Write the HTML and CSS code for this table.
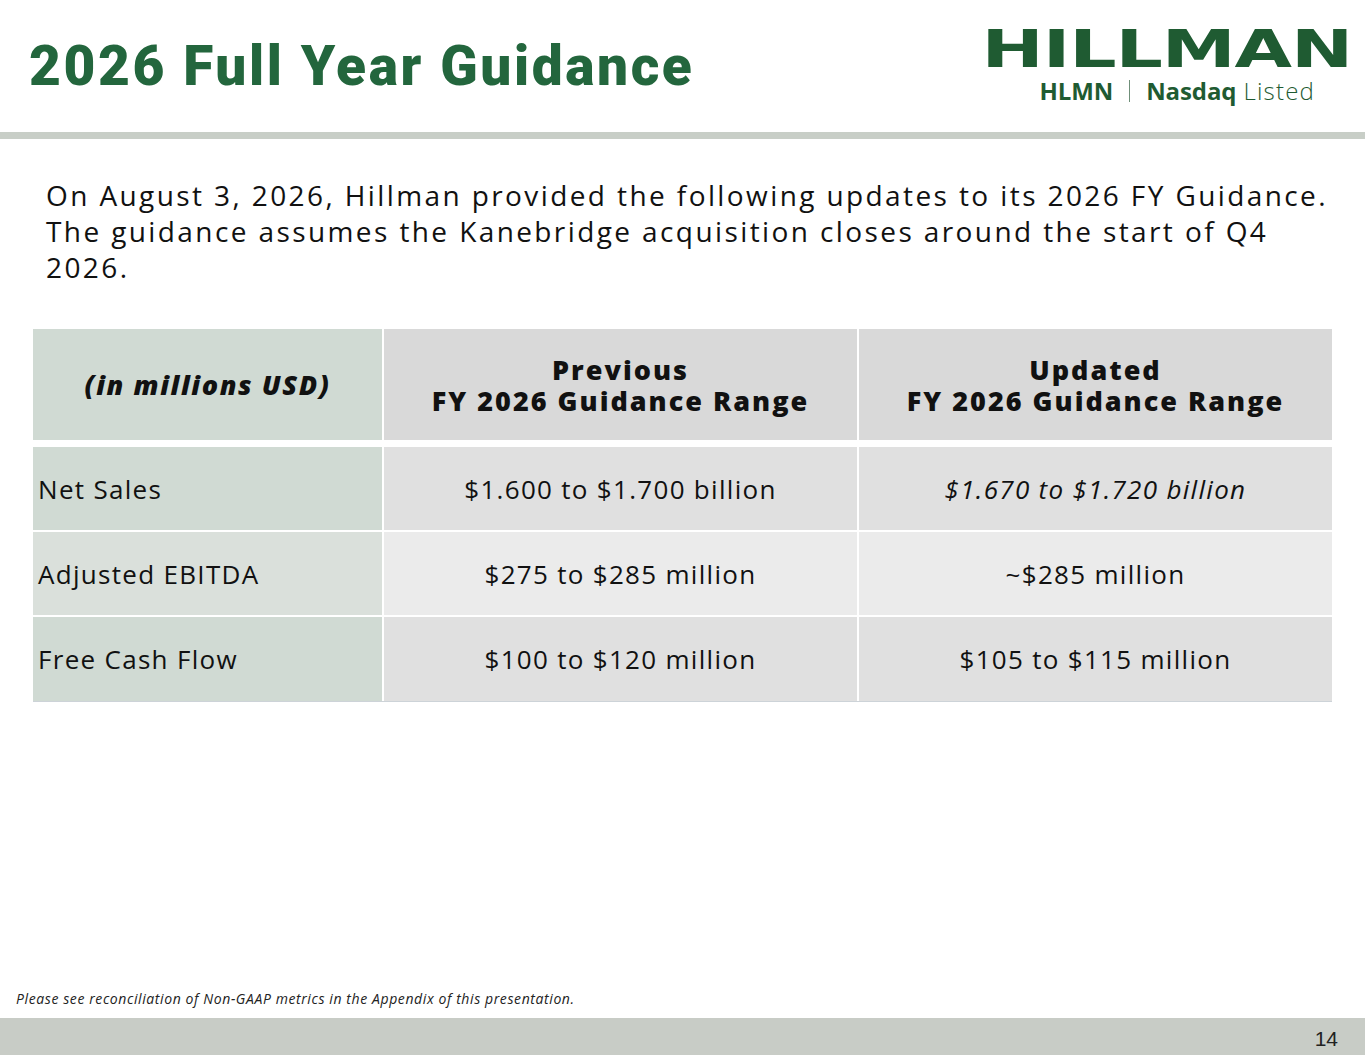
FILE: index.html
```html
<!DOCTYPE html>
<html>
<head>
<meta charset="utf-8">
<link rel="stylesheet" href="styles.css">
</head>
<body>
<div class="slide">
  <header class="header">
    <h1 class="title">2026 Full Year Guidance</h1>
    <div class="logo">
      <div class="logo-word">HILLMAN</div>
      <div class="logo-sub"><span class="b">HLMN</span><span class="sep"></span><span class="b">Nasdaq</span><span class="l">Listed</span></div>
    </div>
  </header>
  <div class="rule"></div>
  <main class="content">
    <p class="intro">On August 3, 2026, Hillman provided the following updates to its 2026 FY Guidance. The guidance assumes the Kanebridge acquisition closes around the start of Q4 2026.</p>
    <div class="table">
      <div class="row head">
        <div class="cell c1 hi">(in millions USD)</div>
        <div class="cell c2">Previous<br>FY 2026 Guidance Range</div>
        <div class="cell c3">Updated<br>FY 2026 Guidance Range</div>
      </div>
      <div class="row dark">
        <div class="cell c1">Net Sales</div>
        <div class="cell c2">$1.600 to $1.700 billion</div>
        <div class="cell c3 it">$1.670 to $1.720 billion</div>
      </div>
      <div class="row light">
        <div class="cell c1">Adjusted EBITDA</div>
        <div class="cell c2">$275 to $285 million</div>
        <div class="cell c3">~$285 million</div>
      </div>
      <div class="row dark last">
        <div class="cell c1">Free Cash Flow</div>
        <div class="cell c2">$100 to $120 million</div>
        <div class="cell c3">$105 to $115 million</div>
      </div>
    </div>
  </main>
  <p class="note">Please see reconciliation of Non-GAAP metrics in the Appendix of this presentation.</p>
  <footer class="footer"><span class="page">14</span></footer>
</div>
</body>
</html>
```
FILE: styles.css
```css
* { box-sizing: border-box; }
html, body { margin: 0; padding: 0; background: #fff; }
body { font-family: "Open Sans", "Liberation Sans", sans-serif; color: #111; }
.slide { width: 1365px; height: 1055px; display: flex; flex-direction: column; overflow: hidden; }
.header { height: 132px; display: flex; justify-content: space-between; align-items: flex-start; padding: 0 13px 0 29px; }
.title { margin: 36px 0 0; font-family: Roboto, "Liberation Sans", sans-serif; font-weight: 900; font-size: 55px; line-height: 60px; color: #23663d; letter-spacing: 2.6px; }
.logo { margin-top: 29px; display: flex; flex-direction: column; align-items: flex-end; color: #1f5b32; }
.logo-word { font-family: "DejaVu Sans", sans-serif; font-weight: 700; font-size: 52px; line-height: 40px; height: 40px; transform: scaleX(1.43); transform-origin: right center; letter-spacing: -0.8px; }
.logo-sub { margin-top: 8px; margin-right: 37px; font-family: "Open Sans", sans-serif; font-size: 24px; line-height: 28px; display: flex; align-items: center; }
.logo-sub .b { font-weight: 700; letter-spacing: -0.1px; }
.logo-sub .l { font-weight: 300; margin-left: 7px; letter-spacing: 1.2px; }
.logo-sub .sep { display: inline-block; width: 1px; height: 22px; background: #6f8f79; margin: 0 16px; }
.rule { height: 7px; background: #c8cec7; }
.content { padding: 0 33px; flex: 1; }
.intro { margin: 38px 0 0 13px; width: 1292px; font-size: 28px; line-height: 36px; color: #111; letter-spacing: 2.4px; }
.table { margin-top: 44px; width: 1299px; }
.row { display: grid; grid-template-columns: 349px 475px 475px; }
.cell { display: flex; align-items: center; justify-content: center; text-align: center; font-size: 26px; letter-spacing: 1.3px; }
.cell.c2 { border-left: 2px solid #fff; }
.cell.c3 { border-left: 2px solid #fff; }
.cell.c1 { justify-content: flex-start; padding-left: 5px; text-align: left; }
.row.head { height: 111px; margin-bottom: 7px; }
.row.head .cell { font-weight: 800; font-size: 27px; line-height: 31px; background: #d9d9d9; letter-spacing: 2px; }
.row.head .cell.c1 { background: #d0dad3; justify-content: center; padding: 0; font-style: italic; letter-spacing: 1.6px; }
.row.dark, .row.light { height: 85px; border-bottom: 2px solid #fff; }
.row.last { border-bottom: 1px solid #cdd3d8; height: 85px; }
.row.dark .cell { background: #e0e0e0; }
.row.dark .cell.c1 { background: #d0dad3; }
.row.light .cell { background: #ebebeb; }
.row.light .cell.c1 { background: #dae0db; }
.it { font-style: italic; }
.note { margin: 0 0 10px 16px; font-size: 14px; font-style: italic; color: #222; letter-spacing: 0.6px; }
.footer { height: 37px; background: #c8ccc6; display: flex; justify-content: flex-end; align-items: center; padding-right: 27px; }
.page { font-family: "Liberation Sans", sans-serif; font-size: 21px; color: #222; margin-top: 4px; }
```
